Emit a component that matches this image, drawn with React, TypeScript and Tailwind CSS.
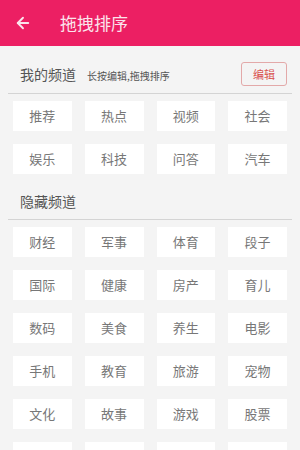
import React from "react";
import { ArrowLeft } from "lucide-react";

const mine = ["推荐", "热点", "视频", "社会", "娱乐", "科技", "问答", "汽车"];
const hidden = [
  "财经", "军事", "体育", "段子",
  "国际", "健康", "房产", "育儿",
  "数码", "美食", "养生", "电影",
  "手机", "教育", "旅游", "宠物",
  "文化", "故事", "游戏", "股票",
];

function Grid({ items, blanks = 0 }: { items: string[]; blanks?: number }) {
  return (
    <div className="grid grid-cols-4 gap-x-[13px] gap-y-[13px] px-[13px]">
      {items.map((c) => (
        <div key={c} className="h-[30px] bg-white flex items-center justify-center text-[13px] text-[#777]">
          {c}
        </div>
      ))}
      {/* next row is only peeking in at the bottom edge */}
      {Array.from({ length: blanks }).map((_, i) => (
        <div key={"b" + i} className="h-[30px] bg-white" />
      ))}
    </div>
  );
}

export default function App() {
  return (
    <div
      className="w-[300px] h-[450px] overflow-hidden bg-[#f4f4f4]"
      style={{ fontFamily: '"Noto Sans CJK SC", "Noto Sans", sans-serif' }}
    >
      <div className="h-[46px] bg-[#ec1f63] flex items-center">
        <ArrowLeft size={18} strokeWidth={2.5} className="ml-[14px] text-[#fbe4ec]" />
        <span className="ml-[28px] text-[17px] text-[#fbe4ec]">拖拽排序</span>
      </div>

      <div className="mt-[16px] h-[24px] flex items-center pl-[20px] pr-[13px]">
        <span className="text-[14px] text-[#555]">我的频道</span>
        <span className="ml-[11px] mt-[2px] text-[10px] text-[#555]">长按编辑,拖拽排序</span>
        <button className="ml-auto w-[46px] h-[24px] border border-[#e3a9a9] rounded-[3px] text-[11px] text-[#d9534f] flex items-center justify-center">
          编辑
        </button>
      </div>
      <div className="mt-[7px] mx-[8px] h-px bg-[#d4d4d4]" />
      <div className="mt-[7px]">
        <Grid items={mine} />
      </div>

      <div className="mt-[15px] h-[24px] flex items-center pl-[20px]">
        <span className="text-[14px] text-[#555]">隐藏频道</span>
      </div>
      <div className="mt-[6px] mx-[8px] h-px bg-[#d4d4d4]" />
      <div className="mt-[7px]">
        <Grid items={hidden} blanks={4} />
      </div>
    </div>
  );
}
